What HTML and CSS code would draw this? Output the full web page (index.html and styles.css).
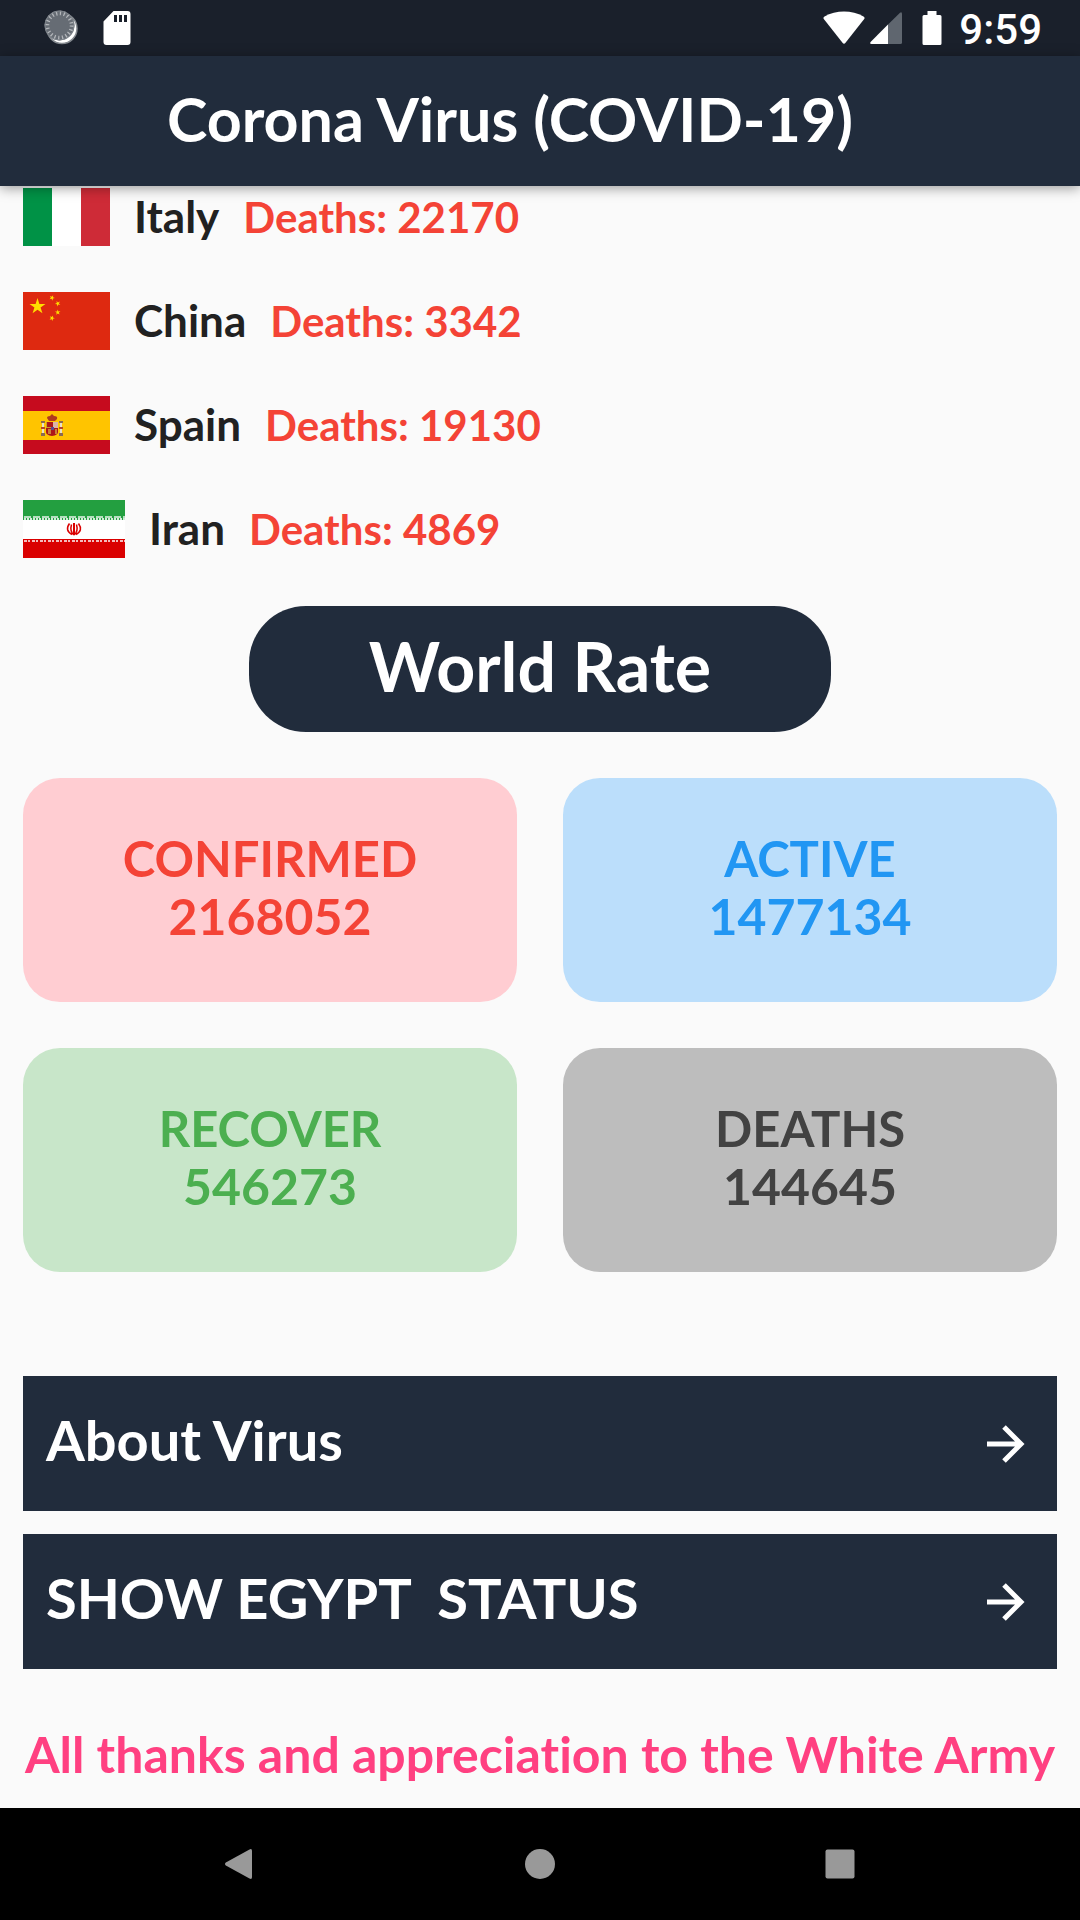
FILE: index.html
```html
<!DOCTYPE html>
<html lang="en">
<head>
<meta charset="utf-8">
<meta name="viewport" content="width=device-width, initial-scale=1">
<title>Corona Virus (COVID-19)</title>
<link rel="stylesheet" href="styles.css">
</head>
<body>
<div class="status-bar">
  <div class="status-group status-left">
    <svg class="ic-sync" viewBox="0 0 36 36" aria-hidden="true">
      <circle cx="18" cy="18.500" r="15" fill="#fff" stroke="#858a90" stroke-width="1.500"/>
      <circle cx="15.500" cy="15.500" r="15" fill="#666c74"/>
      <circle cx="15.500" cy="15.500" r="12.500" fill="none" stroke="#b4b7bb" stroke-width="4.500" stroke-dasharray="1.300 2.627"/>
      <circle cx="15.500" cy="15.500" r="14.500" fill="none" stroke="#7c8289" stroke-width="1"/>
    </svg>
    <svg class="ic-sd" viewBox="0 0 28 34" aria-hidden="true">
      <path fill="#fff" fill-rule="evenodd" d="M10.500 0H24.500A3 3 0 0 1 27.500 3V31A3 3 0 0 1 24.500 34H3.500A3 3 0 0 1 .5 31V10.500ZM11 4v7h3V4zM16 4v7h3V4zM21 4v7h3V4z"/>
    </svg>
  </div>
  <div class="status-group status-right">
    <svg class="ic-wifi" viewBox="0 0 42 34" aria-hidden="true"><path fill="#fff" d="M.8 8Q-.2 6.500 1.500 5.500C13-1.200 29-1.200 40.500 5.500Q42.200 6.500 41.200 8L22.500 31.800Q21 33.500 19.500 31.800Z"/></svg>
    <svg class="ic-signal" viewBox="0 0 32 32" aria-hidden="true"><path fill="#5f666f" d="M18 12.500 30 .8Q32-.5 32 2V30.500Q32 32 30.500 32H18Z"/><path fill="#fff" d="M18 12.500V32H1.500Q-.8 32 .8 29.700Z"/></svg>
    <svg class="ic-battery" viewBox="0 0 20 34" aria-hidden="true"><path fill="#fff" d="M5.500 0h9v4H18q1.500 0 1.500 1.500v27Q19.500 34 18 34H2Q.5 34 .5 32.500v-27Q.5 4 2 4h3.500Z"/></svg>
    <span class="clock">9:59</span>
  </div>
</div>

<header class="app-bar"><h1 class="app-title">Corona Virus (COVID-19)</h1></header>

<main class="content">
  <ul class="countries">
    <li class="country">
      <svg class="flag" viewBox="0 0 87 58" role="img" aria-label="Flag of Italy"><path fill="#009246" d="M0 0h29v58H0z"/><path fill="#fff" d="M29 0h29v58H29z"/><path fill="#ce2b37" d="M58 0h29v58H58z"/></svg>
      <p class="country-text"><span class="name">Italy</span><span class="deaths">Deaths: 22170</span></p>
    </li>
    <li class="country">
      <svg class="flag" viewBox="0 0 30 20" role="img" aria-label="Flag of China">
        <defs><path id="star" fill="#ffde00" d="M0-1 .2245-.309H.951L.3633.118.588.809 0 .382-.588.809-.3633.118-.951-.309H-.2245Z"/></defs>
        <path fill="#de2910" d="M0 0h30v20H0z"/>
        <use href="#star" transform="translate(5 5) scale(2.900)"/>
        <use href="#star" transform="translate(10 2) rotate(23) scale(1)"/>
        <use href="#star" transform="translate(12 4) rotate(46) scale(1)"/>
        <use href="#star" transform="translate(12 7) rotate(70) scale(1)"/>
        <use href="#star" transform="translate(10 9) rotate(21) scale(1)"/>
      </svg>
      <p class="country-text"><span class="name">China</span><span class="deaths">Deaths: 3342</span></p>
    </li>
    <li class="country">
      <svg class="flag" viewBox="0 0 87 58" role="img" aria-label="Flag of Spain">
        <path fill="#c60b1e" d="M0 0h87v58H0z"/><path fill="#ffc400" d="M0 15h87v29H0z"/>
        <path fill="#b03a1e" d="M24 22q0-2 3-2l2-2 2 2q4 0 3 3l-2 2h-6z"/>
        <path fill="#ad1519" d="M23 26h12v10q0 3-6 4Q23 39 23 36z"/>
        <path fill="#c9a227" d="M23 26h6v6h-6z"/><path fill="#ad1519" d="M24 26h5v5h-5z"/>
        <path fill="#dbb3a8" d="M30 26h5v6h-5z"/><path fill="#5a4a90" d="M28 31h3v3h-3z"/>
        <path fill="#c8803a" d="M25 33h3v5h-3zM32 33h2v5h-2z"/>
        <path fill="#e8dfc8" d="M19 27h2v10h-2zM37 27h2v10h-2z"/>
        <path fill="#8c6a50" d="M18 25h4v2h-4zM36 25h4v2h-4zM18 37h4v3h-4zM36 37h4v3h-4z"/>
        <path fill="#b5452a" d="M18 31h4v2h-4zM36 31h4v2h-4z"/>
      </svg>
      <p class="country-text"><span class="name">Spain</span><span class="deaths">Deaths: 19130</span></p>
    </li>
    <li class="country">
      <svg class="flag flag-wide" viewBox="0 0 102 58" role="img" aria-label="Flag of Iran">
        <path fill="#fff" d="M0 0h102v58H0z"/><path fill="#239f40" d="M0 0h102v20H0z"/><path fill="#da0000" d="M0 39h102v19H0z"/>
        <path stroke="#b5dfbf" stroke-width="2" stroke-dasharray="7 2" d="M1 17h101"/>
        <path stroke="#d3ecd9" stroke-width="2" stroke-dasharray="2 1" d="M1 19h101"/>
        <path stroke="#f3bcbc" stroke-width="2" stroke-dasharray="3 1 2 2" d="M1 41h101"/>
        <g fill="none" stroke="#da0000">
          <path stroke-width="2" d="M51 23v12"/>
          <path stroke-width="1.500" d="M46.500 23.500q-5 7 2.500 11M55.500 23.500q5 7-2.500 11M48.500 24.500q-2 7 2.500 10.500M53.500 24.500q2 7-2.500 10.500"/>
        </g>
      </svg>
      <p class="country-text"><span class="name">Iran</span><span class="deaths">Deaths: 4869</span></p>
    </li>
  </ul>

  <h2 class="world-rate">World Rate</h2>

  <section class="stats">
    <div class="card confirmed"><p class="label">CONFIRMED</p><p class="value">2168052</p></div>
    <div class="card active"><p class="label">ACTIVE</p><p class="value">1477134</p></div>
    <div class="card recover"><p class="label">RECOVER</p><p class="value">546273</p></div>
    <div class="card dead"><p class="label">DEATHS</p><p class="value">144645</p></div>
  </section>

  <nav class="links">
    <a class="link" href="#about"><span class="link-text">About Virus</span><svg class="arrow" viewBox="0 0 38 38" aria-hidden="true"><path fill="none" stroke="#fff" stroke-width="5" d="M0 19h33M17 2l17 17-17 17"/></svg></a>
    <a class="link" href="#egypt"><span class="link-text">SHOW EGYPT  STATUS</span><svg class="arrow" viewBox="0 0 38 38" aria-hidden="true"><path fill="none" stroke="#fff" stroke-width="5" d="M0 19h33M17 2l17 17-17 17"/></svg></a>
  </nav>
</main>
<p class="thanks">All thanks and appreciation to the White Army</p>

<div class="system-nav">
  <button class="nav-button" type="button" aria-label="Back"><svg class="nav-icon" viewBox="0 0 30 30" aria-hidden="true"><path fill="#999" d="M24.500.5Q27-.8 27 2V28Q27 30.800 24.500 29.500L.8 16.500Q-.8 15 .8 13.500Z"/></svg></button>
  <button class="nav-button" type="button" aria-label="Home"><svg class="nav-icon" viewBox="0 0 30 30" aria-hidden="true"><circle cx="15" cy="15" r="15" fill="#999"/></svg></button>
  <button class="nav-button" type="button" aria-label="Recent apps"><svg class="nav-icon" viewBox="0 0 30 30" aria-hidden="true"><rect x=".5" y=".5" width="29" height="29" rx="2" fill="#999"/></svg></button>
</div>
</body>
</html>
```
FILE: styles.css
```css
* { box-sizing: border-box; }

body {
  margin: 0;
  min-height: 100vh;
  display: flex;
  flex-direction: column;
  background: #fafafa;
  color: #212121;
  font-family: Lato, "Open Sans", sans-serif;
  font-weight: 700;
  font-variant-ligatures: none;
}

h1, h2, p, ul { margin: 0; padding: 0; }
svg { display: block; flex: none; }

/* Status bar */
.status-bar {
  display: flex;
  justify-content: space-between;
  align-items: center;
  height: 56px;
  padding: 0 38px 0 44px;
  background: #1a202b;
  color: #fff;
}
.status-group { display: flex; align-items: center; }
.status-left { gap: 23px; }
.ic-sync { width: 36px; height: 36px; }
.ic-sd { width: 28px; height: 34px; }
.ic-wifi { width: 42px; height: 34px; margin-right: 5px; }
.ic-signal { width: 32px; height: 32px; margin-right: 20px; }
.ic-battery { width: 20px; height: 34px; margin-right: 17px; }
.clock { font: 500 42px/56px Roboto, sans-serif; padding-top: 4px; }

/* App bar */
.app-bar {
  position: relative;
  z-index: 1;
  padding: 26px 60px 30px 0;
  background: #212c3c;
  box-shadow: 0 2px 12px rgba(0, 0, 0, 0.4);
  color: #fff;
  text-align: center;
}
.app-title { font-size: 61px; line-height: 74px; }

/* Content */
.content { padding: 2px 23px 0; }

.countries { list-style: none; display: grid; gap: 46px; }
.country { display: flex; align-items: center; gap: 24px; }
.flag { width: 87px; height: 58px; }
.flag-wide { width: 102px; }
.country-text {
  display: flex;
  align-items: baseline;
  gap: 24px;
  padding-bottom: 2px;
  line-height: 50px;
}
.name { font-size: 44px; }
.deaths { font-size: 42px; color: #f44336; }

.world-rate {
  width: 582px;
  max-width: 100%;
  margin: 48px auto 46px;
  padding: 20px 0 26px;
  border-radius: 57px;
  background: #212c3c;
  color: #fff;
  font-size: 68px;
  line-height: 80px;
  text-align: center;
}

.stats { display: grid; grid-template-columns: 1fr 1fr; gap: 46px; }
.card {
  padding: 51px 0 57px;
  border-radius: 37px;
  line-height: 58px;
  text-align: center;
}
.label { font-size: 49px; }
.value { font-size: 50px; }
.confirmed { background: #ffcdd2; color: #f44336; }
.active { background: #bbdefb; color: #2196f3; }
.recover { background: #c8e6c9; color: #4caf50; }
.dead { background: #bdbdbd; color: #424242; }

.links { display: grid; gap: 23px; margin-top: 104px; }
.link {
  display: flex;
  justify-content: space-between;
  align-items: center;
  padding: 23px 32px 22px 23px;
  background: #212c3c;
  color: #fff;
  text-decoration: none;
}
.link-text {
  padding: 1px 0 9px;
  font-size: 56px;
  line-height: 80px;
  white-space: pre-wrap;
}
.arrow { width: 38px; height: 38px; }

.thanks {
  margin: 55px 0 24px;
  color: #ff4081;
  font-size: 50px;
  line-height: 60px;
  text-align: center;
}

/* System navigation */
.system-nav {
  display: flex;
  justify-content: center;
  gap: 180px;
  margin-top: auto;
  background: #000;
}
.nav-button {
  display: grid;
  place-items: center;
  width: 120px;
  height: 112px;
  padding: 0;
  border: 0;
  background: none;
}
.nav-icon { width: 30px; height: 30px; }
```
